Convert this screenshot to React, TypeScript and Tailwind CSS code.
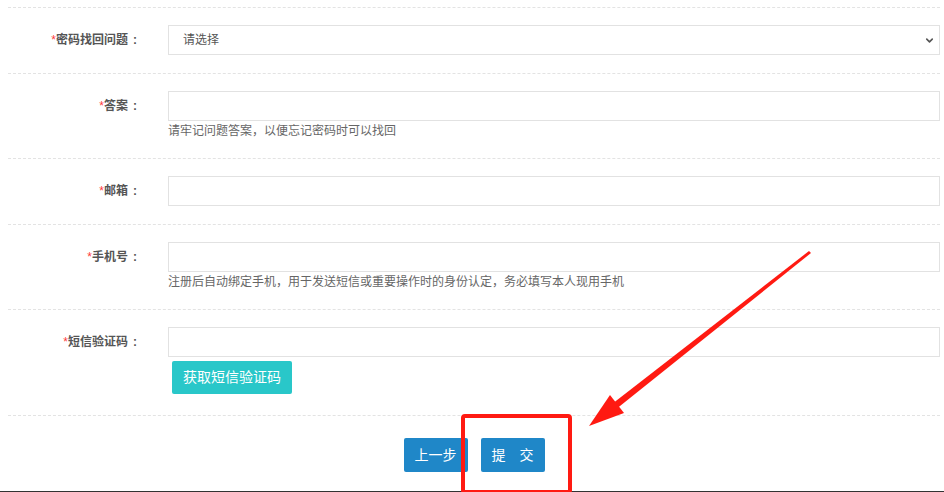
import { ChevronDown } from "lucide-react";

const font = { fontFamily: '"Microsoft YaHei", "Liberation Sans", "Noto Sans CJK SC", sans-serif' };

function Label({ text }: { text: string }) {
  return (
    <div className="h-[30px] flex items-center justify-end text-[12px] font-bold text-[#555]">
      <span className="text-[#ff3b3b] font-normal">*</span>
      {text}
      <span className="inline-block w-[14px] text-center">:</span>
    </div>
  );
}

function Row({ label, children, last }: { label: string; children: React.ReactNode; last?: string }) {
  return (
    <div className={`grid grid-cols-[134px_1fr] gap-x-[26px] pt-[17px] border-b border-dashed border-[#e3e3e3] ${last ?? "pb-[18px]"}`}>
      <Label text={label} />
      <div>{children}</div>
    </div>
  );
}

function Input() {
  return <input className="block w-full h-[30px] border border-[#e2e2e2] bg-white px-3 text-[12px] outline-none" />;
}

function Hint({ text }: { text: string }) {
  return <p className="text-[12px] leading-[18px] text-[#666] mt-[1px]">{text}</p>;
}

export default function App() {
  return (
    <div className="relative h-[492px] w-[944px] bg-white flex flex-col overflow-hidden" style={font}>
      <div className="flex-1 pl-2 pr-[4px]">
        <div className="h-[8px] border-b border-dashed border-[#e3e3e3]" />

        <Row label="密码找回问题">
          <div className="relative">
            <select className="block w-full h-[30px] appearance-none border border-[#e2e2e2] bg-white pl-[14px] text-[12px] text-[#555] outline-none">
              <option>请选择</option>
            </select>
            <ChevronDown className="absolute right-[5px] top-[10px] h-[11px] w-[11px] text-[#555]" strokeWidth={3.5} />
          </div>
        </Row>

        <Row label="答案">
          <Input />
          <Hint text="请牢记问题答案，以便忘记密码时可以找回" />
        </Row>

        <Row label="邮箱">
          <Input />
        </Row>

        <Row label="手机号">
          <Input />
          <Hint text="注册后自动绑定手机，用于发送短信或重要操作时的身份认定，务必填写本人现用手机" />
        </Row>

        <Row label="短信验证码" last="pb-[21px]">
          <Input />
          <button className="mt-[4px] ml-[4px] h-[33px] px-[11px] rounded-[2px] bg-[#29c7c9] text-white text-[14px]">
            获取短信验证码
          </button>
        </Row>

        <div className="flex justify-center gap-[13px] pt-[22px]">
          <button className="h-[34px] w-[64px] rounded-[2px] bg-[#1f87c8] text-white text-[14px]">上一步</button>
          <button className="h-[34px] w-[64px] rounded-[2px] bg-[#1f87c8] text-white text-[14px]">提　交</button>
        </div>
      </div>
      <div className="h-px bg-[#333]" />

      {/* red annotation */}
      <div className="absolute left-[461px] top-[414px] w-[111px] h-[80px] border-[4px] border-[#ff1a12] rounded-[4px]" />
      <svg className="absolute inset-0 pointer-events-none" width="944" height="492">
        <polygon points="811,253 809,251 612,404 615,410" fill="#ff1a12" />
        <polygon points="589,426 624,413 610,395" fill="#ff1a12" />
      </svg>
    </div>
  );
}
